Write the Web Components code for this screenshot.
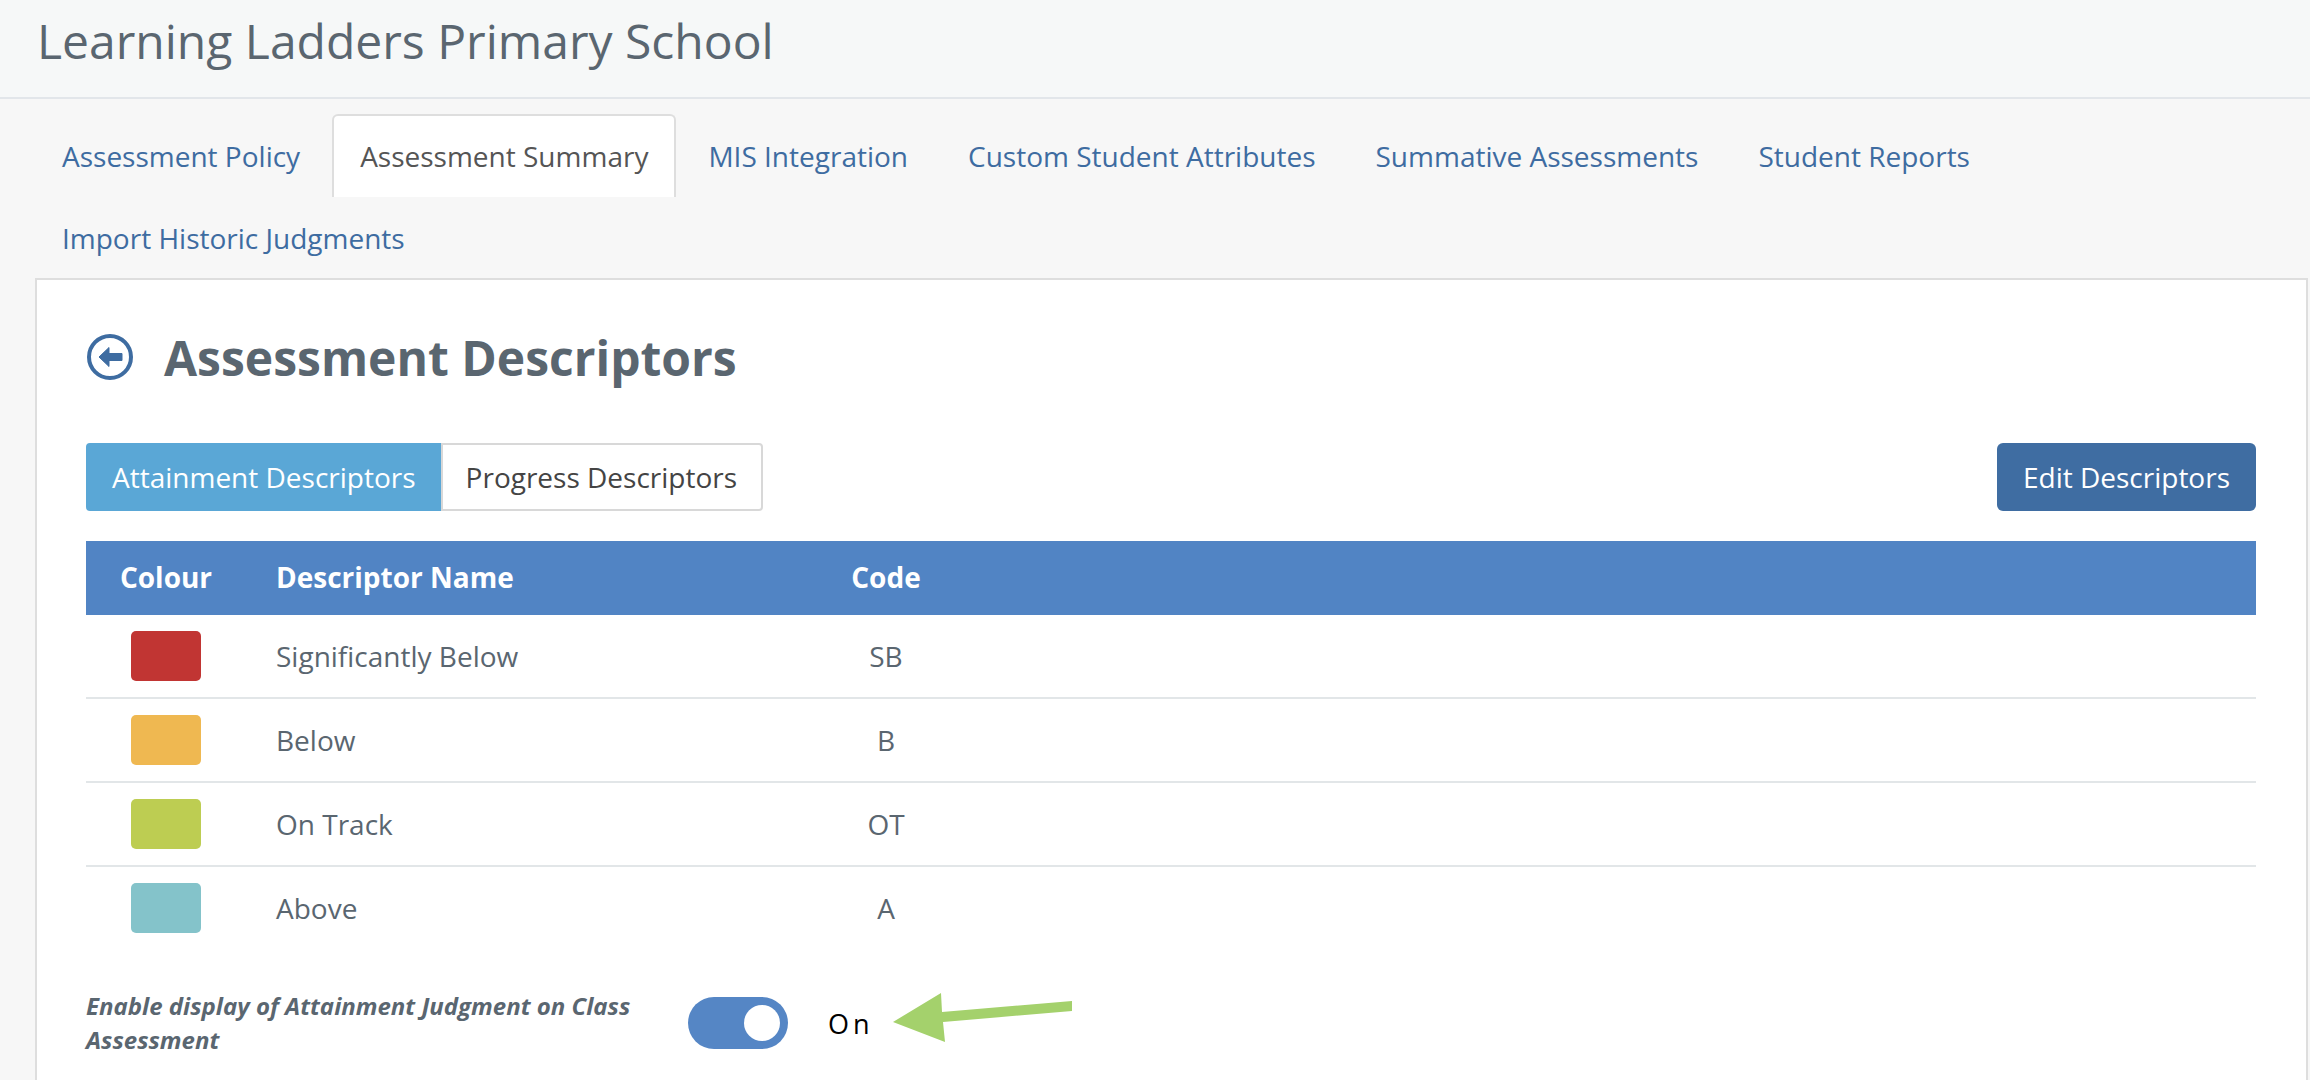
<!DOCTYPE html>
<html>
<head>
<meta charset="utf-8">
<style>
  html, body { margin: 0; height: 1080px; overflow: hidden; background: #f7f7f7; }
  body { font-family: "Open Sans", sans-serif; }
</style>
</head>
<body>
<ll-header>Learning Ladders Primary School</ll-header>
<ll-tabs>
  <ll-tab>Assessment Policy</ll-tab>
  <ll-tab active>Assessment Summary</ll-tab>
  <ll-tab>MIS Integration</ll-tab>
  <ll-tab>Custom Student Attributes</ll-tab>
  <ll-tab>Summative Assessments</ll-tab>
  <ll-tab>Student Reports</ll-tab>
  <ll-tab>Import Historic Judgments</ll-tab>
</ll-tabs>
<ll-panel>
  <ll-title>Assessment Descriptors</ll-title>
  <ll-toolbar>
    <ll-segment active>Attainment Descriptors</ll-segment>
    <ll-segment>Progress Descriptors</ll-segment>
    <ll-button slot="end">Edit Descriptors</ll-button>
  </ll-toolbar>
  <ll-table>
    <ll-row head><span slot="colour">Colour</span><span slot="name">Descriptor Name</span><span slot="code">Code</span></ll-row>
    <ll-row swatch="#c13533"><span slot="name">Significantly Below</span><span slot="code">SB</span></ll-row>
    <ll-row swatch="#efb851"><span slot="name">Below</span><span slot="code">B</span></ll-row>
    <ll-row swatch="#bdcd52"><span slot="name">On Track</span><span slot="code">OT</span></ll-row>
    <ll-row swatch="#84c3ca" last><span slot="name">Above</span><span slot="code">A</span></ll-row>
  </ll-table>
  <ll-setting>Enable display of Attainment Judgment on Class Assessment</ll-setting>
</ll-panel>

<script>
class LLHeader extends HTMLElement {
  constructor () {
    super()
    this.attachShadow({ mode: 'open' }).innerHTML = `
    <style>
      :host {
        display: flex;
        align-items: center;
        box-sizing: border-box;
        height: 99px;
        padding: 0 37px 17px;
        background: #f6f8f8;
        border-bottom: 2px solid #e2e6ea;
        color: #5a6670;
        font-size: 48px;
        font-weight: 400;
      }
    </style>
    <slot></slot>`
  }
}
customElements.define('ll-header', LLHeader)

class LLTabs extends HTMLElement {
  constructor () {
    super()
    this.attachShadow({ mode: 'open' }).innerHTML = `
    <style>
      :host {
        display: flex;
        flex-wrap: wrap;
        box-sizing: border-box;
        padding: 15px 33px 0;
      }
    </style>
    <slot></slot>`
  }
}
customElements.define('ll-tabs', LLTabs)

class LLTab extends HTMLElement {
  constructor () {
    super()
    this.attachShadow({ mode: 'open' }).innerHTML = `
    <style>
      :host {
        display: block;
        box-sizing: border-box;
        height: 83px;
        margin: 0 2px -1px 0;
        padding: 0 27px;
        line-height: 80px;
        border: 2px solid transparent;
        border-bottom: 0;
        border-radius: 6px 6px 0 0;
        color: #3e6ca1;
        font-size: 28px;
        white-space: nowrap;
      }
      :host([active]) {
        margin: 0 3px -1px 1px;
        padding: 0 26px;
        background: #fff;
        border-color: #dedede;
        color: #555;
      }
    </style>
    <slot></slot>`
  }
}
customElements.define('ll-tab', LLTab)

class LLPanel extends HTMLElement {
  constructor () {
    super()
    this.attachShadow({ mode: 'open' }).innerHTML = `
    <style>
      :host {
        display: block;
        box-sizing: border-box;
        margin: 0 2px 0 35px;
        height: 802px;
        padding: 0 50px 0 49px;
        background: #fff;
        border: 2px solid #dedede;
        border-bottom: 0;
      }
    </style>
    <slot></slot>`
  }
}
customElements.define('ll-panel', LLPanel)

class LLTitle extends HTMLElement {
  constructor () {
    super()
    this.attachShadow({ mode: 'open' }).innerHTML = `
    <style>
      :host {
        display: flex;
        align-items: center;
        gap: 31px;
        box-sizing: border-box;
        height: 163px;
        padding: 0 0 9px 1px;
        color: #5a6670;
        font-size: 48px;
        font-weight: 700;
      }
      svg { width: 46px; height: 46px; flex: none; }
    </style>
    <svg viewBox="0 0 46 46">
      <circle cx="23" cy="23" r="21" fill="none" stroke="#3e6ca1" stroke-width="4"/>
      <path d="M12 23 L22 13.5 V19.5 H35 V26.5 H22 V32.5 Z" fill="#3e6ca1" stroke="#3e6ca1" stroke-width="1" stroke-linejoin="round"/>
    </svg>
    <slot></slot>`
  }
}
customElements.define('ll-title', LLTitle)

class LLToolbar extends HTMLElement {
  constructor () {
    super()
    this.attachShadow({ mode: 'open' }).innerHTML = `
    <style>
      :host { display: flex; justify-content: space-between; height: 68px; }
      div { display: flex; }
    </style>
    <div><slot></slot></div>
    <slot name="end"></slot>`
  }
}
customElements.define('ll-toolbar', LLToolbar)

class LLSegment extends HTMLElement {
  constructor () {
    super()
    this.attachShadow({ mode: 'open' }).innerHTML = `
    <style>
      :host {
        display: block;
        box-sizing: border-box;
        height: 68px;
        padding: 0 24px 0 23px;
        line-height: 64px;
        background: #fff;
        border: 2px solid #d8d8d8;
        border-radius: 0 4px 4px 0;
        color: #444;
        font-size: 28px;
        white-space: nowrap;
      }
      :host([active]) {
        padding: 0 23px 0 24px;
        background: #5aa7d6;
        border-color: #5aa7d6;
        border-radius: 4px 0 0 4px;
        color: #fff;
      }
    </style>
    <slot></slot>`
  }
}
customElements.define('ll-segment', LLSegment)

class LLButton extends HTMLElement {
  constructor () {
    super()
    this.attachShadow({ mode: 'open' }).innerHTML = `
    <style>
      :host {
        display: block;
        height: 68px;
        padding: 0 26px;
        line-height: 68px;
        background: #3f6da2;
        border-radius: 6px;
        color: #fff;
        font-size: 28px;
        white-space: nowrap;
      }
    </style>
    <slot></slot>`
  }
}
customElements.define('ll-button', LLButton)

class LLTable extends HTMLElement {
  constructor () {
    super()
    this.attachShadow({ mode: 'open' }).innerHTML = `
    <style>
      :host { display: block; margin-top: 30px; }
    </style>
    <slot></slot>`
  }
}
customElements.define('ll-table', LLTable)

class LLRow extends HTMLElement {
  constructor () {
    super()
    const swatch = this.getAttribute('swatch')
    this.attachShadow({ mode: 'open' }).innerHTML = `
    <style>
      :host {
        display: grid;
        grid-template-columns: 160px 570px 140px 1fr;
        align-items: center;
        box-sizing: border-box;
        height: 84px;
        border-bottom: 2px solid #e2e6e8;
        color: #5a6670;
        font-size: 28px;
      }
      :host([last]) { border-bottom-color: transparent; }
      :host([head]) {
        height: 74px;
        padding-bottom: 2px;
        background: #5184c4;
        border-bottom: 0;
        color: #fff;
        font-weight: 700;
      }
      .colour, .code { display: flex; justify-content: center; }
      .name { padding-left: 30px; }
      .chip { width: 70px; height: 50px; border-radius: 5px; }
    </style>
    <div class="colour">
      <slot name="colour">${swatch ? `<div class="chip" style="background:${swatch}"></div>` : ''}</slot>
    </div>
    <div class="name"><slot name="name"></slot></div>
    <div class="code"><slot name="code"></slot></div>`
  }
}
customElements.define('ll-row', LLRow)

class LLSetting extends HTMLElement {
  constructor () {
    super()
    this.attachShadow({ mode: 'open' }).innerHTML = `
    <style>
      :host {
        display: flex;
        position: relative;
        align-items: center;
        margin-top: 38px;
      }
      .label {
        width: 602px;
        color: #5a6670;
        font-size: 24px;
        font-style: italic;
        font-weight: 700;
        line-height: 34px;
      }
      .toggle {
        position: relative;
        box-sizing: border-box;
        width: 100px;
        height: 52px;
        background: #5586c5;
        border-radius: 26px;
      }
      .knob {
        position: absolute;
        top: 8px;
        right: 8px;
        width: 36px;
        height: 36px;
        background: #fff;
        border-radius: 50%;
      }
      .state {
        margin-left: 40px;
        color: #000;
        font-size: 27px;
        font-weight: 500;
        letter-spacing: 4px;
      }
      svg { position: absolute; left: 804px; top: 1px; }
    </style>
    <div class="label"><slot></slot></div>
    <div class="toggle"><div class="knob"></div></div>
    <span class="state">On</span>
    <svg width="190" height="56" viewBox="0 0 190 56">
      <path d="M3 32 L51 3 L52 22 L182 11 L182 21 L53 32 L55 52 Z" fill="#a4d16c"/>
    </svg>`
  }
}
customElements.define('ll-setting', LLSetting)
</script>
</body>
</html>
